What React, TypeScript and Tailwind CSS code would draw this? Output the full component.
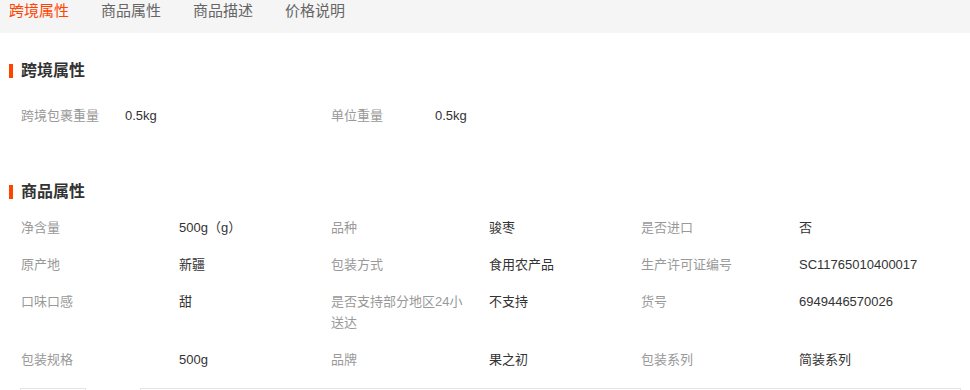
import React from 'react';

const font = { fontFamily: '"Liberation Sans", "Noto Sans CJK SC", sans-serif' };

const tabs = ['跨境属性', '商品属性', '商品描述', '价格说明'];

const crossBorder = [
  ['跨境包裹重量', '0.5kg'],
  ['单位重量', '0.5kg'],
];

const productAttrs = [
  ['净含量', '500g（g）'],
  ['品种', '骏枣'],
  ['是否进口', '否'],
  ['原产地', '新疆'],
  ['包装方式', '食用农产品'],
  ['生产许可证编号', 'SC11765010400017'],
  ['口味口感', '甜'],
  ['是否支持部分地区24小送达', '不支持'],
  ['货号', '6949446570026'],
  ['包装规格', '500g'],
  ['品牌', '果之初'],
  ['包装系列', '简装系列'],
];

function SectionTitle({ title }: { title: string }) {
  return (
    <div className="flex items-center gap-[8px] pl-[9px]">
      <span className="block h-[14px] w-[4px] bg-[#ff4400]" />
      <h3 className="text-[16px] leading-[20px] font-bold text-[#333]">{title}</h3>
    </div>
  );
}

export default function App() {
  return (
    <div className="w-[970px] h-[390px] overflow-hidden bg-white text-[13px]" style={font}>
      <div className="flex h-[33px] gap-[32px] bg-[#f5f5f5] pl-[9px]">
        {tabs.map((t, i) => (
          <span
            key={t}
            className={`text-[15px] leading-[22px] ${i === 0 ? 'text-[#ff4400]' : 'text-[#666]'}`}
          >
            {t}
          </span>
        ))}
      </div>

      <div className="mt-[28px]">
        <SectionTitle title="跨境属性" />
        <div className="mt-[16px] grid grid-cols-[310px_310px_310px] pl-[21px]">
          {crossBorder.map(([k, v]) => (
            <div key={k} className="flex py-[8px] leading-[21px]">
              <span className="w-[104px] shrink-0 text-[#999]">{k}</span>
              <span className="text-[#333]">{v}</span>
            </div>
          ))}
        </div>
      </div>

      <div className="mt-[48px]">
        <SectionTitle title="商品属性" />
        <div className="mt-[7px] grid grid-cols-[310px_310px_310px] pl-[21px]">
          {productAttrs.map(([k, v]) => (
            <div key={k} className="flex py-[8px] leading-[21px]">
              <span className="w-[158px] shrink-0 pr-[18px] text-[#999]">{k}</span>
              <span className="text-[#333]">{v}</span>
            </div>
          ))}
        </div>
      </div>

      <div className="mt-[10px] flex">
        <div className="ml-[20px] h-[40px] w-[66px] border border-[#e5e5e5]" />
        <div className="ml-[54px] h-[40px] w-[821px] border border-[#e5e5e5]" />
      </div>
    </div>
  );
}
